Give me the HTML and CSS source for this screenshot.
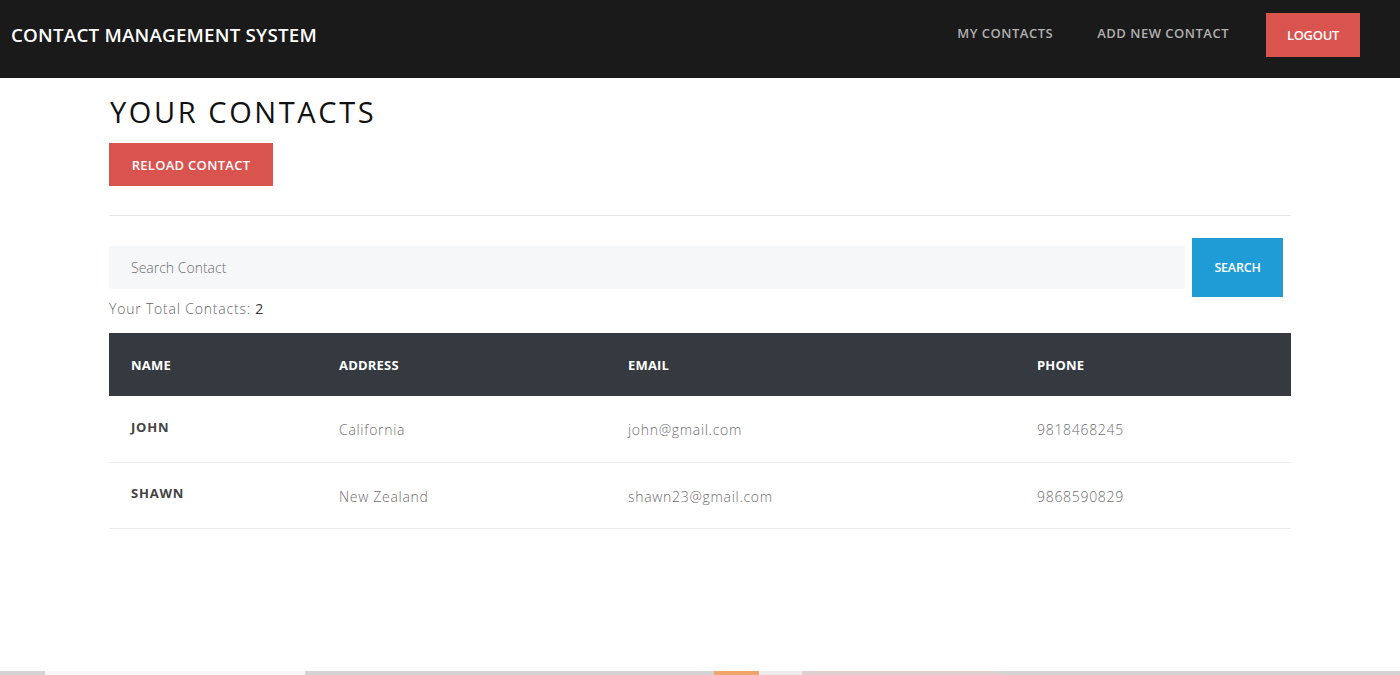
FILE: index.html
```html
<!DOCTYPE html>
<html lang="en">
<head>
<meta charset="utf-8">
<title>Contact Management System</title>
<link rel="stylesheet" href="styles.css">
</head>
<body>
<header class="topbar">
  <div class="brand">CONTACT MANAGEMENT SYSTEM</div>
  <nav class="nav">
    <a class="nav-link" href="#">MY CONTACTS</a>
    <a class="nav-link" href="#">ADD NEW CONTACT</a>
    <a class="btn btn-red btn-logout" href="#">LOGOUT</a>
  </nav>
</header>
<main class="container">
  <h1 class="page-title">YOUR CONTACTS</h1>
  <a class="btn btn-red btn-reload" href="#">RELOAD CONTACT</a>
  <hr class="divider">
  <div class="search-row">
    <input class="search-input" type="text" placeholder="Search Contact">
    <button class="btn btn-blue btn-search">SEARCH</button>
  </div>
  <p class="total">Your Total Contacts: <span class="total-num">2</span></p>
  <table class="contacts">
    <thead>
      <tr><th class="c-name">NAME</th><th class="c-addr">ADDRESS</th><th class="c-email">EMAIL</th><th class="c-phone">PHONE</th></tr>
    </thead>
    <tbody>
      <tr><td class="name">JOHN</td><td>California</td><td>john@gmail.com</td><td>9818468245</td></tr>
      <tr><td class="name">SHAWN</td><td>New Zealand</td><td>shawn23@gmail.com</td><td>9868590829</td></tr>
    </tbody>
  </table>
</main>
<div class="taskstrip">
  <span class="seg seg-gray1"></span>
  <span class="seg seg-white"></span>
  <span class="seg seg-gray2"></span>
  <span class="seg seg-orange"></span>
  <span class="seg seg-light"></span>
  <span class="seg seg-pink"></span>
  <span class="seg seg-gray3"></span>
</div>
</body>
</html>
```
FILE: styles.css
```css
* { box-sizing: border-box; }
html, body { margin: 0; padding: 0; }
body {
  font-family: "Open Sans", "Noto Sans", "Liberation Sans", sans-serif;
  background: #fff;
  color: #222;
  width: 1400px;
  height: 675px;
  overflow: hidden;
  position: relative;
}
.topbar {
  height: 78px;
  background: #1a1a1a;
  display: flex;
  align-items: center;
  justify-content: space-between;
  padding: 0 40px 0 11px;
}
.brand {
  color: #fff;
  font-size: 18.8px;
  font-weight: 600;
  letter-spacing: 0.2px;
  margin-top: -8px;
}
.nav { display: flex; align-items: center; margin-top: -9px; }
.nav-link {
  color: #b0b0b0;
  text-decoration: none;
  font-size: 13px;
  font-weight: 600;
  letter-spacing: 0.5px;
  margin-right: 44px;
  margin-top: -4px;
}
.btn {
  display: inline-flex;
  align-items: center;
  justify-content: center;
  color: #fff;
  text-decoration: none;
  font-family: inherit;
  font-weight: 600;
  border: none;
}
.btn-red { background: #d9534f; }
.btn-blue { background: #1f9bd5; }
.btn-logout {
  width: 94px;
  height: 44px;
  font-size: 13px;
  letter-spacing: -0.3px;
  margin-left: -7px;
}
.container {
  width: 1182px;
  margin-left: 109px;
  padding-top: 17px;
}
.page-title {
  margin: 0 0 14px 1px;
  font-size: 29px;
  font-weight: 500;
  letter-spacing: 2.6px;
  color: #111;
  line-height: 34px;
}
.btn-reload {
  width: 164px;
  height: 43px;
  font-size: 13px;
  letter-spacing: 0.3px;
}
.divider {
  border: none;
  border-top: 1px solid #e6e6e6;
  margin: 29px 0 22px 0;
}
.search-row {
  display: flex;
  align-items: center;
  width: 1174px;
}
.search-input {
  flex: 1;
  height: 43px;
  border: none;
  background: #f6f7f9;
  padding: 0 22px;
  font-family: inherit;
  font-size: 14px;
  font-weight: 300;
  color: #555;
  outline: none;
}
.search-input::placeholder { color: #6d6d6d; }
.btn-search {
  width: 91px;
  height: 59px;
  margin-left: 7px;
  font-size: 12.5px;
  letter-spacing: -0.2px;
}
.total {
  margin: 2px 0 14px 0;
  font-size: 14px;
  font-weight: 300;
  color: #666;
  letter-spacing: 0.8px;
  line-height: 20px;
}
.total-num { color: #333; font-weight: 400; }
.contacts {
  width: 1182px;
  border-collapse: collapse;
  table-layout: fixed;
}
.contacts th {
  background: #343a40;
  color: #fff;
  text-align: left;
  font-size: 13px;
  font-weight: 700;
  height: 63px;
  padding: 0 22px;
  letter-spacing: 0.2px;
}
.c-name { width: 208px; }
.c-addr { width: 289px; }
.c-email { width: 409px; }
.c-phone { width: 276px; }
.contacts td {
  height: 66px;
  padding: 2px 22px 0 22px;
  border-bottom: 1px solid #ececec;
  font-size: 14px;
  font-weight: 300;
  color: #6e6e6e;
  letter-spacing: 0.7px;
}
.contacts td.name {
  font-size: 13px;
  font-weight: 700;
  color: #444;
  letter-spacing: 0.8px;
  padding-top: 0;
  padding-bottom: 4px;
}
.taskstrip {
  position: absolute;
  left: 0;
  bottom: 0;
  width: 1400px;
  height: 4px;
  display: flex;
}
.seg { height: 100%; display: block; }
.seg-gray1 { width: 45px; background: #d3d3d3; }
.seg-white { width: 260px; background: #f7f7f7; }
.seg-gray2 { width: 409px; background: #d3d3d3; }
.seg-orange { width: 45px; background: #f0a46e; }
.seg-light { width: 43px; background: #ececec; }
.seg-pink { width: 200px; background: #e0d0d0; }
.seg-gray3 { flex: 1; background: #d3d3d3; }
```
